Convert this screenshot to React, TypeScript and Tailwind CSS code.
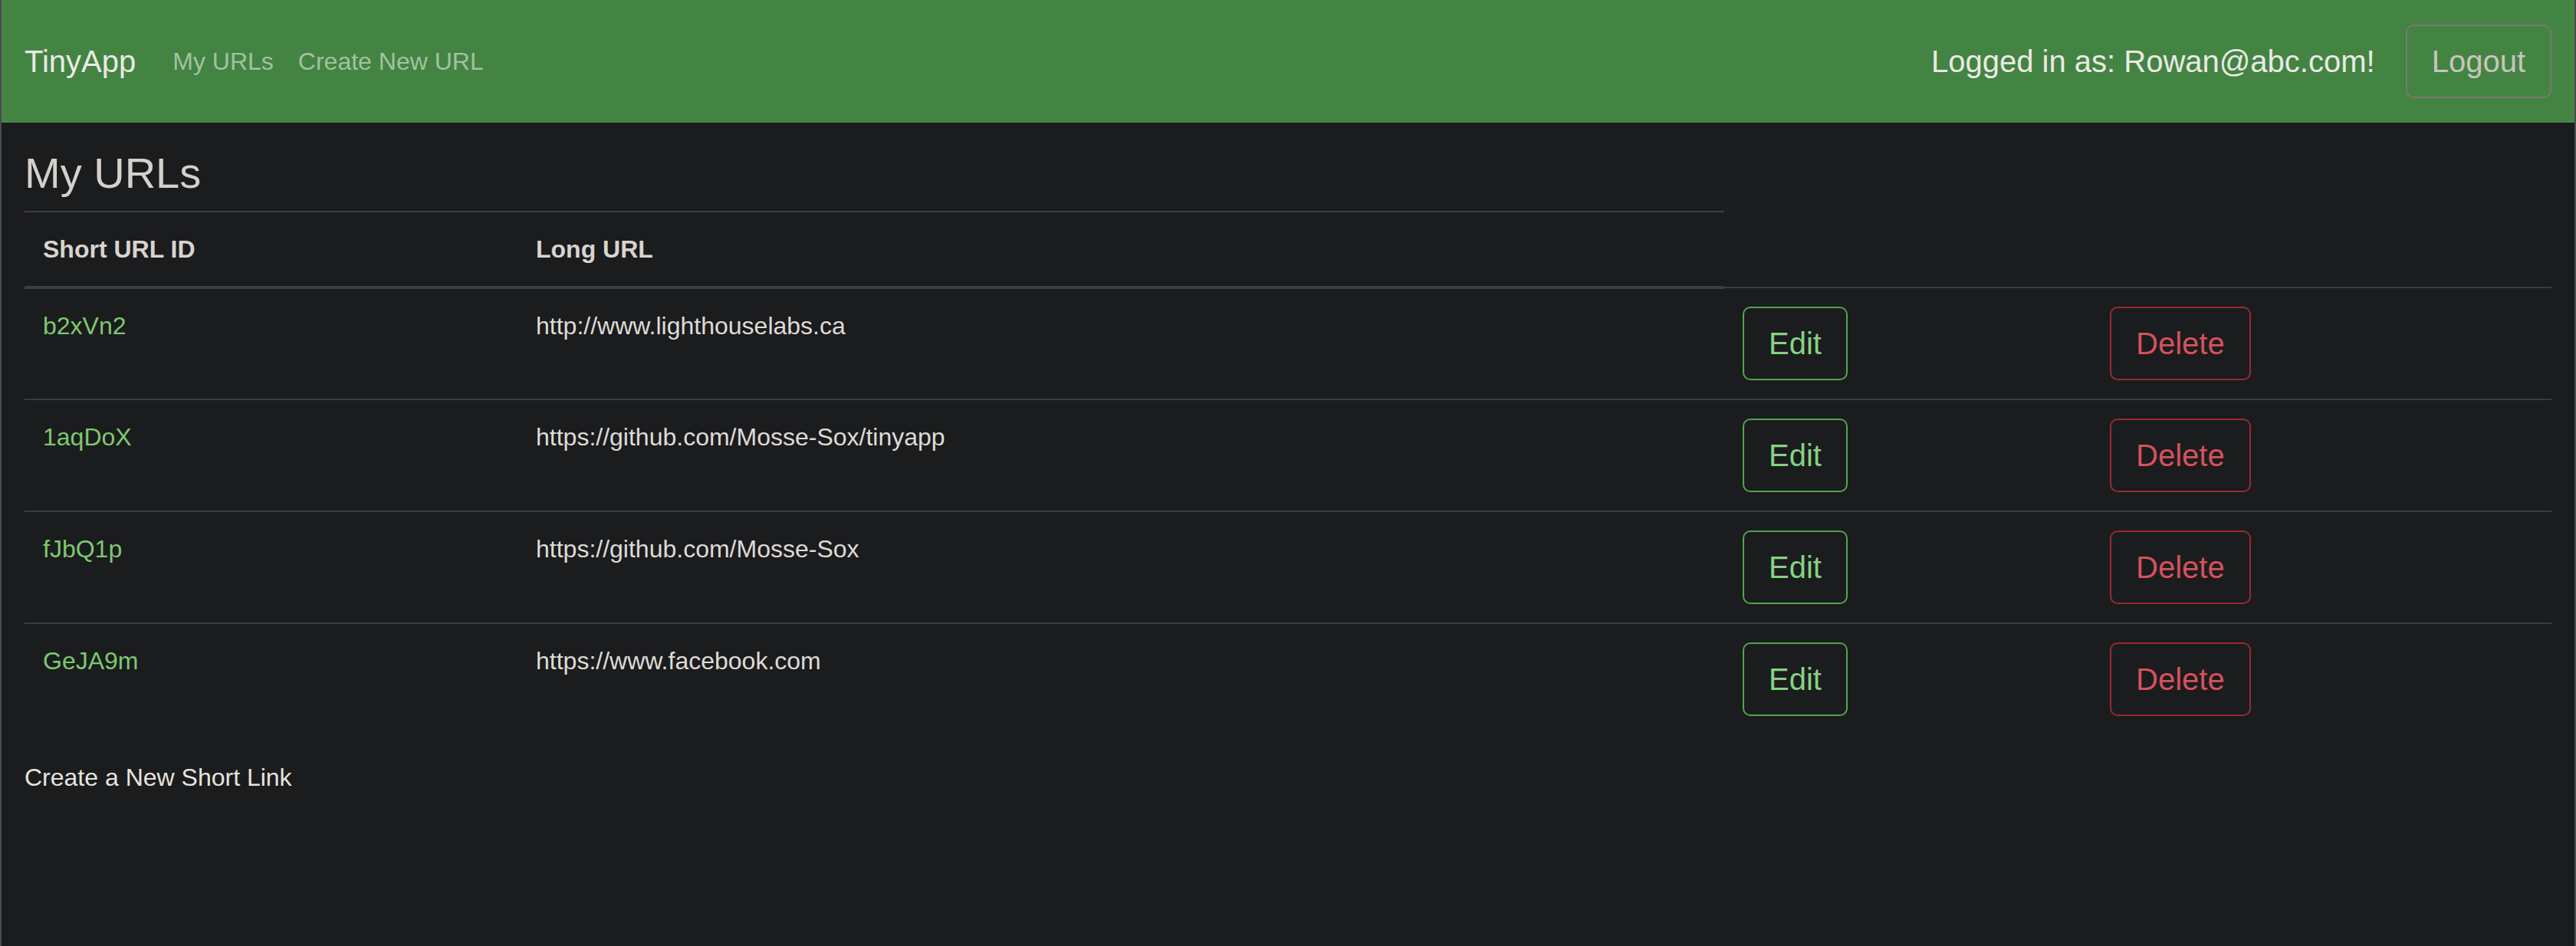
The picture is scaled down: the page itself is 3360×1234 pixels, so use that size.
const urls = [
  { id: "b2xVn2", long: "http://www.lighthouselabs.ca" },
  { id: "1aqDoX", long: "https://github.com/Mosse-Sox/tinyapp" },
  { id: "fJbQ1p", long: "https://github.com/Mosse-Sox" },
  { id: "GeJA9m", long: "https://www.facebook.com" },
];

export default function App() {
  return (
    <div
      className="min-h-screen bg-[#1b1c1e] border-x-2 border-[#4a4b4d] text-[#e2dfda]"
      style={{ fontFamily: '"Liberation Sans", Arial, sans-serif' }}
    >
      <nav className="h-[160px] flex items-center px-[30px] bg-[#438443]">
        <span className="text-[40px] leading-[60px] text-[#ebe9e5] mr-[32px]">TinyApp</span>
        <a className="text-[32px] px-[16px] text-[#a2c29f]">My URLs</a>
        <a className="text-[32px] px-[16px] text-[#a2c29f]">Create New URL</a>
        <div className="ml-auto flex items-center gap-[40px]">
          <span className="text-[40px] text-[#ebe9e5]">Logged in as: Rowan@abc.com!</span>
          <button className="border-2 border-[#7d7872] rounded-[10px] px-[32px] py-[16px] text-[40px] leading-[60px] text-[#c9c4bd]">
            Logout
          </button>
        </div>
      </nav>

      <main className="px-[30px] pt-[32px]">
        <h3 className="text-[56px] leading-[67px] font-medium text-[#d4d0ca] mb-[16px]">My URLs</h3>

        <table className="w-full table-fixed border-collapse text-[32px] leading-[48px]">
          <colgroup>
            <col className="w-[643px]" />
            <col className="w-[1574px]" />
            <col className="w-[479px]" />
            <col />
          </colgroup>
          <thead>
            <tr>
              <th className="text-left font-bold text-[#d8d4ce] p-[24px] border-t-2 border-b-4 border-[#3c3f42]">
                Short URL ID
              </th>
              <th className="text-left font-bold text-[#d8d4ce] p-[24px] border-t-2 border-b-4 border-[#3c3f42]">
                Long URL
              </th>
            </tr>
          </thead>
          <tbody>
            {urls.map((u) => (
              <tr key={u.id}>
                <td className="align-top p-[24px] border-t-2 border-[#3a3c3f]">
                  <a className="text-[#7ec86f]">{u.id}</a>
                </td>
                <td className="align-top p-[24px] border-t-2 border-[#3a3c3f] text-[#dedbd6]">{u.long}</td>
                <td className="align-top p-[24px] border-t-2 border-[#3a3c3f]">
                  <button className="border-2 border-[#4fa54f] rounded-[10px] px-[32px] py-[16px] text-[40px] leading-[60px] text-[#84d37f]">
                    Edit
                  </button>
                </td>
                <td className="align-top p-[24px] border-t-2 border-[#3a3c3f]">
                  <button className="border-2 border-[#982a2e] rounded-[10px] px-[32px] py-[16px] text-[40px] leading-[60px] text-[#d5525c]">
                    Delete
                  </button>
                </td>
              </tr>
            ))}
          </tbody>
        </table>

        <a className="block mt-[32px] text-[32px] leading-[48px] text-[#e6e3df]">Create a New Short Link</a>
      </main>
    </div>
  );
}
